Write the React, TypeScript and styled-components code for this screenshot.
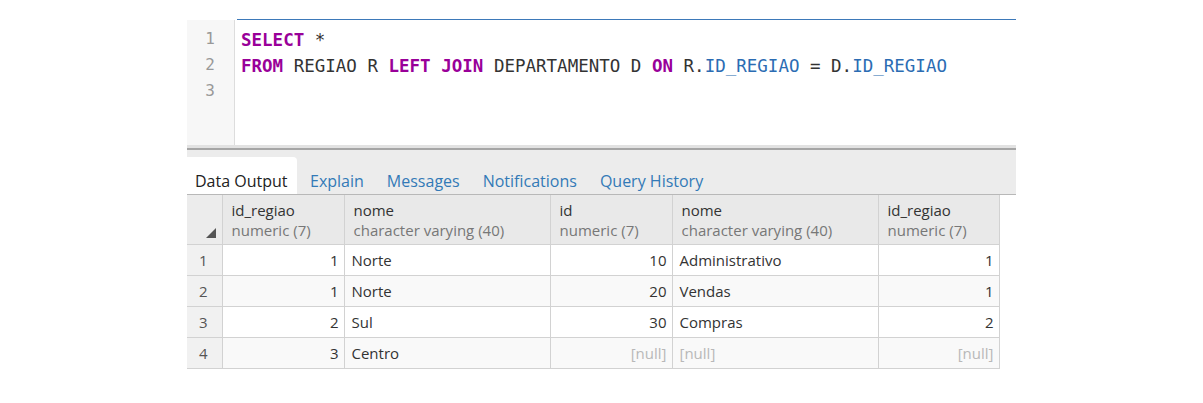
import React, { FC } from 'react'
import styled, { createGlobalStyle } from 'styled-components'

const GlobalStyle = createGlobalStyle`
  body {
    margin: 0;
    background: #ffffff;
    font-family: 'Open Sans', 'Noto Sans', sans-serif;
  }
`

const Page = styled('div')`
  width: 829px;
  padding: 19px 0 0 187px;
`

const Editor = styled('section')`
  display: flex;
  height: 126px;
  font-family: 'DejaVu Sans Mono', 'Liberation Mono', monospace;
  font-size: 17.5px;
  line-height: 26px;
`

const Gutter = styled('div')`
  width: 48px;
  margin-top: 1px;
  padding: 6px 19px 0 0;
  box-sizing: border-box;
  background: #f7f7f7;
  border-right: 1px solid #dddddd;
  color: #999999;
  text-align: right;
  font-size: 16px;
`

const CodeArea = styled('div')`
  flex: 1;
  margin-left: 2px;
  padding: 7px 0 0 4px;
  border-top: 1px solid #3d79b9;
  color: #333333;
  white-space: pre;
`

const Keyword = styled('span')`
  color: #990099;
  font-weight: bold;
`

const Ident = styled('span')`
  color: #2b6cb3;
`

const Splitter = styled('div')`
  height: 3px;
  background: #e2e2e2;
  border-bottom: 2px solid #a5a5a5;
`

const TabBar = styled('nav')`
  display: flex;
  align-items: flex-end;
  height: 44px;
  background: #ececec;
  border-bottom: 1px solid #b8b8b8;
`

const Tab = styled('div')<{ $active?: boolean }>`
  height: 37px;
  box-sizing: border-box;
  padding: ${(p) => (p.$active ? '13px 9px 0 8px' : '13px 11.5px 0')};
  margin-right: ${(p) => (p.$active ? '2px' : '0')};
  line-height: 22px;
  font-size: 16px;
  color: ${(p) => (p.$active ? '#222222' : '#337ab7')};
  background: ${(p) => (p.$active ? '#ffffff' : 'transparent')};
  border-top-right-radius: 4px;
`

const Grid = styled('table')`
  border-collapse: collapse;
  table-layout: fixed;
  width: 812px;
  font-size: 15px;
  color: #333333;
`

const HeadCell = styled('th')`
  height: 49px;
  padding: 0 0 0 9px;
  background: #e9e9e9;
  border: 1px solid #d2d2d2;
  border-top: none;
  text-align: left;
  font-weight: normal;
  vertical-align: middle;
  line-height: 20px;
  white-space: nowrap;
  overflow: hidden;
`

const Corner = styled('th')`
  position: relative;
  background: #ececec;
  border: 1px solid #d2d2d2;
  border-top: none;
  border-left: none;
`

const CornerMark = styled('span')`
  position: absolute;
  right: 6px;
  bottom: 6px;
  width: 0;
  height: 0;
  border-left: 10px solid transparent;
  border-bottom: 10px solid #555555;
`

const ColName = styled('div')`
  color: #333333;
  font-size: 15px;
`

const ColType = styled('div')`
  color: #777777;
  font-size: 15px;
`

const Row = styled('tr')<{ $striped?: boolean }>`
  height: 31px;
  background: ${(p) => (p.$striped ? '#f9f9f9' : '#ffffff')};
`

const RowNum = styled('td')`
  background: #f1f1f1;
  border: 1px solid #d2d2d2;
  border-left: none;
  color: #555555;
  text-align: center;
  padding: 0 2px 0 0;
`

const Cell = styled('td')<{ $num?: boolean; $null?: boolean }>`
  border: 1px solid #d2d2d2;
  padding: ${(p) => (p.$num ? '0 5px 0 0' : '0 0 0 7px')};
  text-align: ${(p) => (p.$num ? 'right' : 'left')};
  color: ${(p) => (p.$null ? '#b8b8b8' : '#333333')};
  white-space: nowrap;
  overflow: hidden;
`

type Column = { name: string; type: string; width: number; num: boolean }

const columns: Column[] = [
  { name: 'id_regiao', type: 'numeric (7)', width: 122, num: true },
  { name: 'nome', type: 'character varying (40)', width: 206, num: false },
  { name: 'id', type: 'numeric (7)', width: 122, num: true },
  { name: 'nome', type: 'character varying (40)', width: 206, num: false },
  { name: 'id_regiao', type: 'numeric (7)', width: 121, num: true },
]

const rows: (string | null)[][] = [
  ['1', 'Norte', '10', 'Administrativo', '1'],
  ['1', 'Norte', '20', 'Vendas', '1'],
  ['2', 'Sul', '30', 'Compras', '2'],
  ['3', 'Centro', null, null, null],
]

const tabs = ['Data Output', 'Explain', 'Messages', 'Notifications', 'Query History']

const App: FC = () => {
  return (
    <Page>
      <GlobalStyle />
      <Editor>
        <Gutter>
          <div>1</div>
          <div>2</div>
          <div>3</div>
        </Gutter>
        <CodeArea>
          <div>
            <Keyword>SELECT</Keyword> *
          </div>
          <div>
            <Keyword>FROM</Keyword> REGIAO R <Keyword>LEFT JOIN</Keyword> DEPARTAMENTO D{' '}
            <Keyword>ON</Keyword> R.<Ident>ID_REGIAO</Ident> = D.<Ident>ID_REGIAO</Ident>
          </div>
          <div> </div>
        </CodeArea>
      </Editor>
      <Splitter />
      <TabBar>
        {tabs.map((t, i) => (
          <Tab key={t} $active={i === 0}>
            {t}
          </Tab>
        ))}
      </TabBar>
      <Grid>
        <colgroup>
          <col style={{ width: 35 }} />
          {columns.map((c, i) => (
            <col key={i} style={{ width: c.width }} />
          ))}
        </colgroup>
        <thead>
          <tr>
            <Corner>
              <CornerMark />
            </Corner>
            {columns.map((c, i) => (
              <HeadCell key={i}>
                <ColName>{c.name}</ColName>
                <ColType>{c.type}</ColType>
              </HeadCell>
            ))}
          </tr>
        </thead>
        <tbody>
          {rows.map((r, ri) => (
            <Row key={ri} $striped={ri % 2 === 1}>
              <RowNum>{ri + 1}</RowNum>
              {r.map((v, ci) => (
                <Cell key={ci} $num={columns[ci].num} $null={v === null}>
                  {v === null ? '[null]' : v}
                </Cell>
              ))}
            </Row>
          ))}
        </tbody>
      </Grid>
    </Page>
  )
}

export default App
